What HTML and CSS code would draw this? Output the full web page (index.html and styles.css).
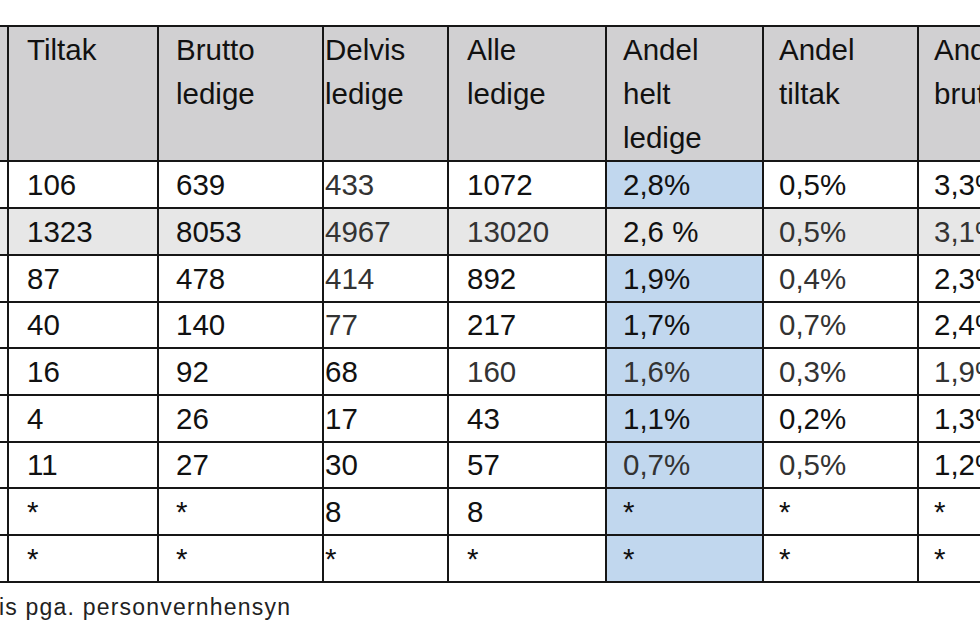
FILE: index.html
```html
<!DOCTYPE html>
<html lang="no">
<head>
<meta charset="utf-8">
<title>Ledighet</title>
<link rel="stylesheet" href="styles.css">
</head>
<body>
<div class="page">
  <table class="stats">
    <colgroup>
      <col class="c-name">
      <col class="c-tiltak">
      <col class="c-brutto">
      <col class="c-delvis">
      <col class="c-alle">
      <col class="c-helt">
      <col class="c-andtiltak">
      <col class="c-andbrutto">
    </colgroup>
    <thead>
      <tr class="head">
        <th></th>
        <th>Tiltak</th>
        <th>Brutto<br>ledige</th>
        <th class="tight">Delvis<br>ledige</th>
        <th>Alle<br>ledige</th>
        <th>Andel<br>helt<br>ledige</th>
        <th>Andel<br>tiltak</th>
        <th>Andel<br>brutto</th>
      </tr>
    </thead>
    <tbody>
      <tr>
        <td></td><td>106</td><td>639</td><td class="tight dim">433</td><td>1072</td><td class="blue">2,8%</td><td>0,5%</td><td>3,3%</td>
      </tr>
      <tr class="grey">
        <td></td><td>1323</td><td>8053</td><td class="tight dim">4967</td><td class="dim">13020</td><td>2,6 %</td><td class="dim">0,5%</td><td class="dim">3,1%</td>
      </tr>
      <tr>
        <td></td><td>87</td><td>478</td><td class="tight dim">414</td><td>892</td><td class="blue">1,9%</td><td class="dim">0,4%</td><td>2,3%</td>
      </tr>
      <tr class="short">
        <td></td><td>40</td><td>140</td><td class="tight dim">77</td><td>217</td><td class="blue">1,7%</td><td class="dim">0,7%</td><td>2,4%</td>
      </tr>
      <tr>
        <td></td><td>16</td><td>92</td><td class="tight">68</td><td class="dim">160</td><td class="blue dim">1,6%</td><td class="dim">0,3%</td><td class="dim">1,9%</td>
      </tr>
      <tr>
        <td></td><td>4</td><td>26</td><td class="tight">17</td><td>43</td><td class="blue">1,1%</td><td>0,2%</td><td>1,3%</td>
      </tr>
      <tr class="short">
        <td></td><td>11</td><td>27</td><td class="tight">30</td><td>57</td><td class="blue dim">0,7%</td><td class="dim">0,5%</td><td>1,2%</td>
      </tr>
      <tr>
        <td></td><td>*</td><td>*</td><td class="tight">8</td><td>8</td><td class="blue">*</td><td>*</td><td>*</td>
      </tr>
      <tr>
        <td></td><td>*</td><td>*</td><td class="tight">*</td><td>*</td><td class="blue">*</td><td>*</td><td>*</td>
      </tr>
    </tbody>
  </table>
  <p class="note">is pga. personvernhensyn</p>
</div>
</body>
</html>
```
FILE: styles.css
```css
html, body {
  margin: 0;
  padding: 0;
  overflow: hidden;
  background: #ffffff;
}

.page {
  padding-top: 25px;
  font-family: "Liberation Sans", Arial, sans-serif;
  color: #111111;
}

.stats {
  border-collapse: collapse;
  table-layout: fixed;
  width: 1078px;
  font-size: 29.5px;
}

.c-name { width: 8px; }
.c-tiltak { width: 150px; }
.c-brutto { width: 165px; }
.c-delvis { width: 125px; }
.c-alle { width: 158px; }
.c-helt { width: 157px; }
.c-andtiltak { width: 155px; }
.c-andbrutto { width: 160px; }

.stats th,
.stats td {
  border: 2px solid #161616;
  padding: 1px 0 0 18px;
  vertical-align: top;
  text-align: left;
  font-weight: normal;
  line-height: 44px;
  white-space: nowrap;
  overflow: hidden;
}

.stats th:nth-child(3),
.stats td:nth-child(3) {
  padding-left: 17px;
}

.stats th:nth-child(6),
.stats td:nth-child(6) {
  padding-left: 16px;
}

.stats th:nth-child(7),
.stats td:nth-child(7),
.stats th:nth-child(8),
.stats td:nth-child(8) {
  padding-left: 15px;
}

.stats th:first-child,
.stats td:first-child {
  border-left: none;
  padding: 0;
}

.stats .head th {
  background: #d1d0d2;
  height: 132px;
  line-height: 44px;
  padding-top: 1px;
}

.stats tbody td {
  height: 44px;
}

.stats tbody .short td {
  padding-top: 0;
}

.stats .tight {
  padding-left: 1px;
}

.stats .blue {
  background: #c1d7ee;
}

.stats .grey td {
  background: #e7e7e7;
}

.stats .dim {
  color: #333333;
}

.note {
  margin: 10px 0 0 -1px;
  font-size: 23px;
  line-height: 28px;
  letter-spacing: 1.2px;
  color: #222222;
}
```
